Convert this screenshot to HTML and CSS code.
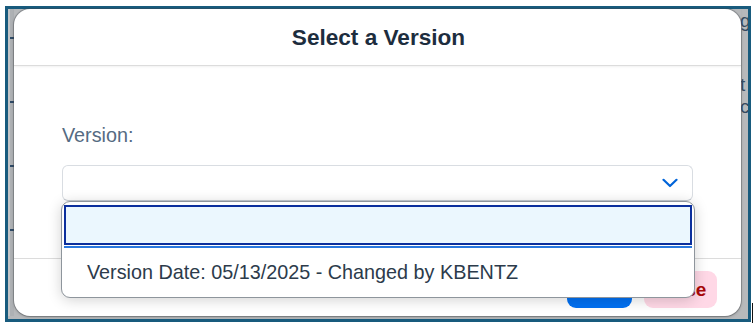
FILE: index.html
```html
<!DOCTYPE html>
<html>
<head>
<meta charset="utf-8">
<link rel="stylesheet" href="styles.css">
</head>
<body>
<div class="wrap">
  <div class="frame">
    <div class="strip-left">
      <span class="tick"></span><span class="tick"></span><span class="tick"></span><span class="tick"></span>
    </div>
    <div class="dialog">
      <header class="dlg-head"><h1 class="dlg-title">Select a Version</h1></header>
      <section class="dlg-body">
        <label class="field-label">Version:</label>
        <div class="select">
          <div class="select-input">
            <svg class="chev" width="16" height="10" viewBox="0 0 16 10"><path d="M1.5 1.8 L8 8 L14.5 1.8" fill="none" stroke="#0064d9" stroke-width="2.2" stroke-linecap="round" stroke-linejoin="round"/></svg>
          </div>
          <div class="popover">
            <div class="search-wrap"><div class="search"></div></div>
            <div class="item">Version Date: 05/13/2025 - Changed by KBENTZ</div>
          </div>
        </div>
      </section>
      <footer class="dlg-foot">
        <button class="btn btn-ok">OK</button>
        <button class="btn btn-close">Close</button>
      </footer>
    </div>
    <div class="strip-right">
      <span class="bg-l l1">g</span>
      <span class="bg-l l2">t</span>
      <span class="bg-l l3">c</span>
    </div>
  </div>
  <span class="caret"></span>
</div>
</body>
</html>
```

FILE: styles.css
```css
* { box-sizing: border-box; }
html, body { margin: 0; padding: 0; background: #ffffff; }
body { font-family: "Liberation Sans", Arial, sans-serif; width: 753px; height: 327px; overflow: hidden; }

.wrap { display: flex; align-items: flex-end; padding: 6px 0 0 5px; }

.frame {
  width: 746px;
  height: 316px;
  border: 3px solid #185b7d;
  background: #b7b9bb;
  display: flex;
  padding-bottom: 3px;
}

.strip-left {
  width: 6px;
  display: flex;
  flex-direction: column;
  align-items: flex-end;
  gap: 62px;
  padding-top: 28px;
  background: linear-gradient(90deg, #c3c5c7 0 2px, #aeb1b4 2px 6px);
}
.tick { width: 4px; height: 2px; background: #2e4a66; }

.dialog {
  width: 727px;
  height: 307px;
  background: #ffffff;
  border-radius: 16px;
  box-shadow: 0 0 0 1px rgba(70, 75, 80, 0.35), 0 1px 3px rgba(0,0,0,0.25);
  display: flex;
  flex-direction: column;
}

.dlg-head {
  height: 57px;
  flex: none;
  display: flex;
  align-items: center;
  justify-content: center;
  border-bottom: 1px solid #dcdcdc;
  box-shadow: 0 1px 2px rgba(0,0,0,0.06);
}
.dlg-title {
  margin: 0;
  font-size: 22.6px;
  font-weight: bold;
  color: #1d2d3e;
  padding-top: 1px;
  padding-left: 2px;
}

.dlg-body {
  height: 192px;
  flex: none;
  padding: 57px 48px 0 48px;
  display: flex;
  flex-direction: column;
}
.field-label {
  font-size: 19.8px;
  line-height: 24px;
  color: #556b82;
  margin-bottom: 18px;
}

.select { position: relative; }
.select-input {
  height: 36px;
  border: 1px solid #d9dde2;
  border-bottom-color: #c7ccd2;
  border-radius: 6px;
  background: #fff;
  display: flex;
  align-items: center;
  justify-content: flex-end;
  padding-right: 14px;
}
.chev { display: block; margin-top: -1px; }

.popover {
  position: absolute;
  top: 100%;
  left: -1px;
  width: 634px;
  height: 97px;
  background: #fff;
  border: 1px solid #8e959c;
  border-radius: 9px;
  box-shadow: 0 2px 14px rgba(0,0,0,0.18);
  z-index: 5;
}
.search-wrap {
  margin: 3px 2px 0 2px;
  padding-bottom: 1px;
  border-bottom: 2px solid #2a78de;
}
.search {
  height: 40px;
  border: 2px solid #0b2f9d;
  background: #ebf7fe;
}
.item {
  height: 48px;
  display: flex;
  align-items: center;
  padding-left: 25px;
  font-size: 19.8px;
  color: #2c3b4b;
}

.dlg-foot {
  flex: 1;
  border-top: 1px solid #dcdcdc;
  display: flex;
  justify-content: flex-end;
  align-items: flex-start;
  gap: 12px;
  padding: 12px 24px 0 0;
}
.btn {
  font-family: "Liberation Sans", Arial, sans-serif;
  font-size: 19px;
  font-weight: bold;
  height: 37px;
  border: none;
  border-radius: 9px;
  padding: 0;
}
.btn-ok { width: 65px; background: #0070f2; color: #fff; }
.btn-close { width: 73px; background: #ffd8e6; color: #aa0808; }

.strip-right {
  width: 7px;
  overflow: hidden;
  display: flex;
  flex-direction: column;
  color: #354a60;
  font-size: 19px;
  line-height: 20px;
}
.bg-l { display: block; margin-left: -1px; }
.l1 { margin-top: 2px; }
.l2 { margin-top: 44px; }
.l3 { margin-top: 2px; }

.caret { width: 2px; height: 20px; background: #111; margin-left: 1px; margin-bottom: -1px; }
```
